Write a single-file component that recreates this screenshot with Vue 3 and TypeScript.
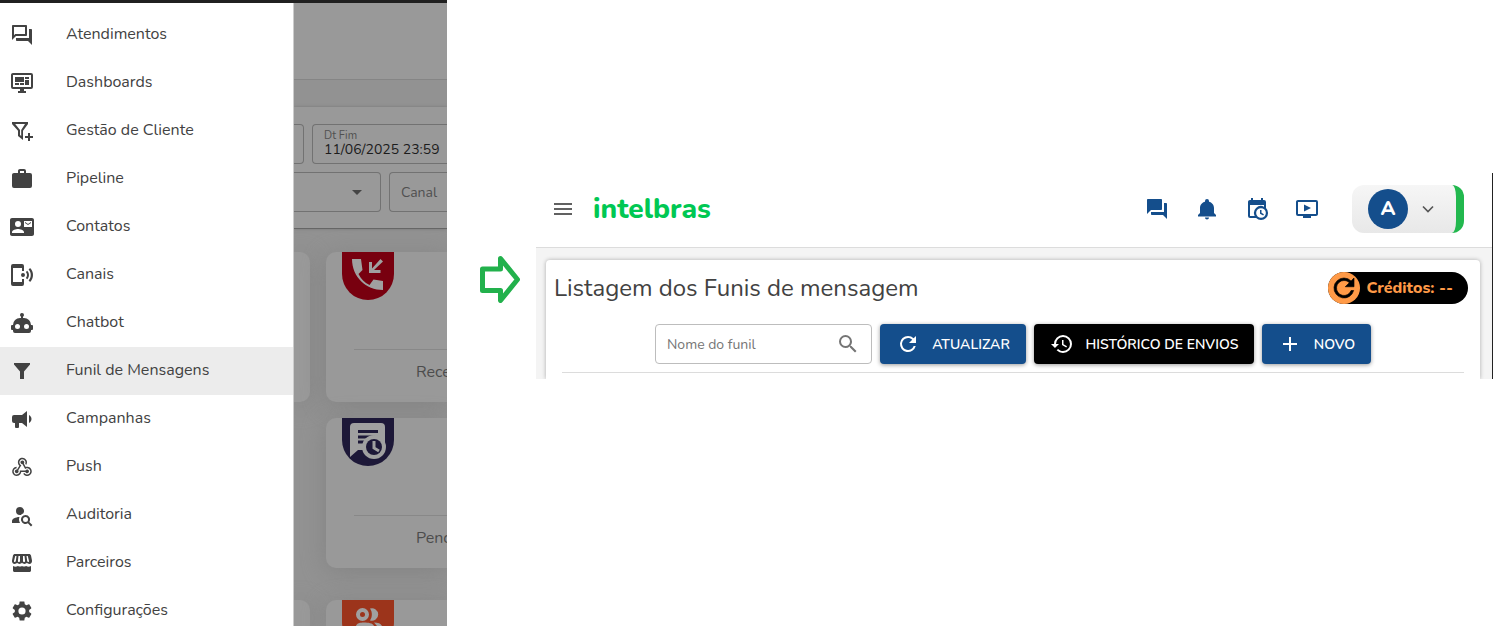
<script setup lang="ts">
interface MenuItem {
  label: string
  path: string
  active?: boolean
}

const forumOutline = 'M15 4v7H5.17L4 12.17V4h11m1-2H3c-.55 0-1 .45-1 1v14l4-4h10c.55 0 1-.45 1-1V3c0-.55-.45-1-1-1zm5 4h-2v9H6v2c0 .55.45 1 1 1h11l4 4V7c0-.55-.45-1-1-1z'
const forum = 'M21 6h-2v9H6v2c0 .55.45 1 1 1h11l4 4V7c0-.55-.45-1-1-1zm-4 6V3c0-.55-.45-1-1-1H3c-.55 0-1 .45-1 1v14l4-4h10c.55 0 1-.45 1-1z'
const bell = 'M12 22.5c1.1 0 2-.9 2-2h-4c0 1.1.9 2 2 2zm7-6.500V11c0-3.200-2.200-5.700-5-6.300V4a2 2 0 0 0-4 0v.7C7.200 5.300 5 7.800 5 11v5l-2 2v1.500h18V18z'
const calendarClock = 'M15 13h1.500v2.820l2.440 1.410-.75 1.300L15 16.690V13m4-5H5v11h4.670A7 7 0 0 1 19 9.670V8M5 21a2 2 0 0 1-2-2V5c0-1.110.89-2 2-2h1V1h2v2h8V1h2v2h1a2 2 0 0 1 2 2v6.100a7 7 0 0 1-9.900 9.900H5m11-9.850A4.850 4.850 0 0 0 11.150 16 4.850 4.850 0 1 0 16 11.150z'
const video = 'M21 3H3c-1.110 0-2 .89-2 2v12a2 2 0 0 0 2 2h5v2h8v-2h5c1.100 0 2-.9 2-2V5a2 2 0 0 0-2-2zm0 14H3V5h18v12zM9 7.500v7l7-3.500z'
const refresh = 'M17.650 6.350A7.960 7.960 0 0 0 12 4a8 8 0 1 0 7.730 10h-2.080A6 6 0 1 1 12 6c1.660 0 3.140.69 4.220 1.780L13 11h7V4z'
const history = 'M13.500 8H12v5l4.280 2.540.72-1.210-3.500-2.080V8M13 3a9 9 0 0 0-9 9H1l3.960 4.030L9 12H6a7 7 0 1 1 7 7c-1.930 0-3.680-.79-4.940-2.060l-1.420 1.420A8.900 8.900 0 0 0 13 21a9 9 0 0 0 0-18'
const magnify = 'M9.500 3A6.500 6.500 0 0 1 16 9.500c0 1.610-.59 3.090-1.560 4.230l.27.27h.79l5 5-1.500 1.500-5-5v-.79l-.27-.27A6.520 6.520 0 0 1 9.500 16a6.500 6.500 0 0 1 0-13m0 2a4.500 4.500 0 1 0 0 9 4.500 4.500 0 0 0 0-9'

const menu: MenuItem[] = [
  { label: 'Atendimentos', path: forumOutline },
  { label: 'Dashboards', path: 'M21 16V4H3v12h18m0-14a2 2 0 0 1 2 2v12a2 2 0 0 1-2 2h-7v2h2v2H8v-2h2v-2H3a2 2 0 0 1-2-2V4c0-1.110.89-2 2-2h18M5 6h9v5H5V6m10 0h4v2h-4V6m4 3v5h-4V9h4M5 12h4v2H5v-2m5 0h4v2h-4v-2z' },
  { label: 'Gestão de Cliente', path: 'M2 3h16v2l-5 6.700V21l-5-4v-5.300L2 5zM5.200 5 10 11v5l1.200 1V11L15 5zM18 14h2v3h3v2h-3v3h-2v-3h-3v-2h3z' },
  { label: 'Pipeline', path: 'M10 2h4a2 2 0 0 1 2 2v2h4a2 2 0 0 1 2 2v11a2 2 0 0 1-2 2H4a2 2 0 0 1-2-2V8c0-1.110.89-2 2-2h4V4c0-1.110.89-2 2-2m4 4V4h-4v2h4z' },
  { label: 'Contatos', path: 'M21 8V7l-3 2-3-2v1l3 2 3-2zm1-5H2C.9 3 0 3.900 0 5v14c0 1.100.9 2 2 2h20c1.100 0 2-.9 2-2V5c0-1.100-.9-2-2-2zM8 6a3 3 0 1 1 0 6 3 3 0 0 1 0-6zm6 12H2v-1c0-2 4-3.100 6-3.100s6 1.100 6 3.100v1zm8-6h-8V6h8v6z' },
  { label: 'Canais', path: 'M3 1h9a2 2 0 0 1 2 2v5h-2V5H3v14h9v-3h2v5a2 2 0 0 1-2 2H3a2 2 0 0 1-2-2V3a2 2 0 0 1 2-2zM13 10a2 2 0 1 1 0 4 2 2 0 0 1 0-4zM17.200 7.700c2.400 2.400 2.400 6.200 0 8.600l-1.300-1.300c1.500-1.800 1.500-4.200 0-6zM20.100 5c3.900 3.900 3.900 10.100 0 14l-1.500-1.500c2.900-3.200 2.900-7.800 0-11z' },
  { label: 'Chatbot', path: 'M12 2a2 2 0 0 1 2 2c0 .74-.4 1.390-1 1.730V7h1a7 7 0 0 1 7 7h1a1 1 0 0 1 1 1v3a1 1 0 0 1-1 1h-1v1a2 2 0 0 1-2 2H5a2 2 0 0 1-2-2v-1H2a1 1 0 0 1-1-1v-3a1 1 0 0 1 1-1h1a7 7 0 0 1 7-7h1V5.730A2 2 0 0 1 12 2M7.500 13a2.500 2.500 0 1 0 0 5 2.500 2.500 0 0 0 0-5m9 0a2.500 2.500 0 1 0 0 5 2.500 2.500 0 0 0 0-5z' },
  { label: 'Funil de Mensagens', path: 'M4 4h16v1.500l-6 7V20h-4v-7.500l-6-7z', active: true },
  { label: 'Campanhas', path: 'M12 8H4a2 2 0 0 0-2 2v4a2 2 0 0 0 2 2h1v4a1 1 0 0 0 1 1h2a1 1 0 0 0 1-1v-4h3l5 4V4l-5 4m9.500 4c0 1.710-.96 3.260-2.500 4V8c1.530.75 2.500 2.300 2.500 4z' },
  { label: 'Push', path: 'M10.46,19C9,21.07 6.15,21.59 4.09,20.15C2.04,18.71 1.56,15.84 3,13.75C3.87,12.5 5.21,11.83 6.58,11.77L6.63,13.2C5.72,13.27 4.84,13.74 4.27,14.56C3.27,16 3.58,17.94 4.95,18.91C6.33,19.87 8.26,19.5 9.26,18.07C9.57,17.62 9.75,17.13 9.82,16.63V15.62L15.4,15.58L15.47,15.47C16,14.55 17.15,14.23 18.05,14.75C18.95,15.27 19.26,16.43 18.73,17.35C18.2,18.26 17.04,18.58 16.14,18.06C15.73,17.83 15.44,17.46 15.31,17.04L11.24,17.06C11.13,17.73 10.87,18.38 10.46,19M17.74,11.86C20.27,12.17 22.07,14.44 21.76,16.93C21.45,19.43 19.15,21.2 16.62,20.89C15.13,20.71 13.9,19.86 13.19,18.68L14.43,17.96C14.92,18.73 15.75,19.28 16.75,19.41C18.5,19.62 20.05,18.43 20.26,16.76C20.47,15.09 19.23,13.56 17.5,13.35C16.96,13.29 16.44,13.36 15.97,13.53L15.12,13.97L12.54,9.2H12.32C11.26,9.16 10.41,8.29 10.44,7.25C10.47,6.21 11.4,5.4 12.45,5.44C13.5,5.5 14.33,6.35 14.3,7.39C14.28,7.83 14.11,8.23 13.84,8.54L15.74,12.05C16.36,11.85 17.04,11.78 17.74,11.86M8.25,9.14C7.25,6.79 8.31,4.1 10.62,3.12C12.94,2.14 15.62,3.25 16.62,5.6C17.21,6.97 17.09,8.47 16.42,9.67L15.18,8.95C15.6,8.14 15.67,7.15 15.27,6.22C14.59,4.62 12.78,3.85 11.23,4.5C9.67,5.16 8.97,7 9.65,8.6C9.93,9.26 10.4,9.77 10.97,10.11L11.36,10.32L8.29,15.31C8.32,15.36 8.36,15.42 8.39,15.5C8.88,16.41 8.54,17.56 7.62,18.05C6.71,18.54 5.56,18.18 5.06,17.24C4.57,16.31 4.91,15.16 5.83,14.67C6.22,14.46 6.65,14.41 7.06,14.5L9.37,10.73C8.9,10.3 8.5,9.76 8.25,9.14Z' },
  { label: 'Auditoria', path: 'M15.500 12a4.500 4.500 0 0 1 3.810 6.900L22.390 22 21 23.390l-3.120-3.070A4.500 4.500 0 1 1 15.500 12m0 2a2.500 2.500 0 1 0 0 5 2.500 2.500 0 0 0 0-5M10 4a4 4 0 0 1 3.180 6.430c-.86.32-1.630.83-2.270 1.470L10 12a4 4 0 0 1 0-8M2 20v-2c0-2.120 3.310-3.860 7.500-4-.32.78-.5 1.620-.5 2.500 0 1.290.38 2.500 1 3.500H2z' },
  { label: 'Parceiros', path: 'M5 3h14c1 0 1.800.6 2 1.500l1 5c.3 1.900-1 3.500-2.700 3.500-1 0-1.900-.5-2.400-1.200-.6.700-1.400 1.200-2.400 1.200s-1.900-.5-2.500-1.200c-.6.700-1.500 1.200-2.500 1.200s-1.800-.5-2.400-1.200c-.5.700-1.400 1.200-2.400 1.200C3 13 1.700 11.400 2 9.500l1-5C3.200 3.600 4 3 5 3zm.2 2L4 10c-.1.600.3 1 .8 1s.9-.4 1-1l.7-5zm3.300 0-.6 5c0 .600.400 1 1 1s1.100-.4 1.100-1V5zm4.500 0v5c0 .600.500 1 1.100 1s1-.4 1-1l-.6-5zm3.500 0 .7 5c.1.600.500 1 1 1s.9-.4.800-1l-1.200-5zM3 15c1.500 1 3.500.9 5 0 1.200.8 2.800.8 4 0 1.200.8 2.800.8 4 0 1.500.9 3.500 1 5 0v4.500c0 .8-.7 1.500-1.500 1.500h-15c-.8 0-1.500-.7-1.500-1.500z' },
  { label: 'Configurações', path: 'M19.140 12.940c.04-.3.06-.61.06-.94 0-.32-.02-.64-.07-.94l2.030-1.580c.18-.14.23-.41.12-.61l-1.920-3.320c-.12-.22-.37-.29-.59-.22l-2.390.96c-.5-.38-1.030-.7-1.620-.94l-.36-2.540c-.04-.24-.24-.41-.48-.41h-3.840c-.24 0-.43.17-.47.41l-.36 2.540c-.59.24-1.130.57-1.620.94l-2.390-.96c-.22-.08-.47 0-.59.22L2.740 8.870c-.12.21-.08.47.12.61l2.030 1.580c-.05.3-.09.63-.09.94s.02.64.07.94l-2.030 1.580c-.18.14-.23.41-.12.61l1.920 3.320c.12.22.37.29.59.22l2.390-.96c.5.38 1.030.7 1.620.94l.36 2.540c.05.24.24.41.48.41h3.840c.24 0 .44-.17.47-.41l.36-2.540c.59-.24 1.130-.56 1.620-.94l2.390.96c.22.08.47 0 .59-.22l1.920-3.320c.12-.22.07-.47-.12-.61l-2.010-1.580zM12 15.600a3.600 3.600 0 1 1 0-7.200 3.600 3.600 0 0 1 0 7.200z' },
]

const shortcuts = [
  { label: 'Conversas', path: forum },
  { label: 'Notificações', path: bell },
  { label: 'Agendamentos', path: calendarClock },
  { label: 'Vídeos', path: video },
]
</script>

<template>
  <div class="page">
    <section class="app-left">
      <nav class="drawer">
        <a v-for="item in menu" :key="item.label" href="#" class="item" :class="{ active: item.active }">
          <svg class="icon" viewBox="0 0 24 24" fill-rule="evenodd"><path :d="item.path" /></svg>
          <span>{{ item.label }}</span>
        </a>
      </nav>
      <div class="shade">
        <div class="shade-header"></div>
        <div class="filters">
          <div class="row">
            <div class="field cut narrow"></div>
            <label class="field grow date">
              <span>Dt Fim</span>
              <input type="text" value="11/06/2025 23:59" />
            </label>
          </div>
          <div class="row">
            <button class="field cut caret" aria-label="Abrir opções">
              <svg viewBox="0 0 24 24"><path d="M7 10l5 5 5-5z" /></svg>
            </button>
            <button class="field grow canal">Canal</button>
          </div>
        </div>
        <div class="tiles">
          <div class="tile edge"></div>
          <article class="tile">
            <div class="badge red">
              <svg viewBox="0 0 52 48" fill="#a0a0a0">
                <path d="M10 7h9l1.500 11-4 4c2.500 5 6 8.500 11 11l4-5.500L41 29v9C24 38 10 25 10 7z" />
                <path d="M27 10h3v6.500L38.500 7l2.500 2.500L32 18h6.500v3H27z" />
              </svg>
            </div>
            <hr />
            <p>Recebidos</p>
          </article>
          <div></div>
          <article class="tile">
            <div class="badge navy">
              <svg viewBox="0 0 52 48">
                <path fill="#a0a0a0" d="M12 5h27a4 4 0 0 1 4 4v17H28v6H16l-8 7V9a4 4 0 0 1 4-4z" />
                <path stroke="#1d1838" stroke-width="3" d="M16 13.500h20M16 19h17M16 24h9" />
                <circle cx="32" cy="29" r="12" fill="#a0a0a0" />
                <circle cx="32" cy="29" r="8" fill="#1d1838" />
                <path d="M32 23v7l5 3" fill="none" stroke="#a0a0a0" stroke-width="3" />
              </svg>
            </div>
            <hr />
            <p>Pendentes</p>
          </article>
          <div class="tile edge last"></div>
          <article class="tile last">
            <div class="badge orange">
              <svg viewBox="0 0 52 26" fill="#a0a0a0">
                <circle cx="20.500" cy="14.500" r="4.500" fill="none" stroke="#a0a0a0" stroke-width="4" />
                <path d="M28 8.500a6.300 6.300 0 1 1 0 12c2.500-3.500 2.500-8.500 0-12zM14 26c1-3 4-3.500 8-3.500S31 23 32 26zM32 22.500c4 0 7 1 8 3.500h-5z" />
              </svg>
            </div>
          </article>
        </div>
      </div>
    </section>

    <div class="pointer">
      <svg viewBox="0 0 40 48"><path d="M2.500 14h18V3.500L37.500 24.500 20.500 45.500V35.500H2.500z" fill="#fff" stroke="#22b14c" stroke-width="5" stroke-linejoin="round" /></svg>
    </div>

    <section class="app-right">
      <header class="topbar">
        <button class="plain burger" aria-label="Menu">
          <svg class="icon" viewBox="0 0 24 24"><path d="M3 6h18v2H3zM3 11h18v2H3zM3 16h18v2H3z" /></svg>
        </button>
        <span class="logo">intelbras</span>
        <div class="shortcuts">
          <button v-for="s in shortcuts" :key="s.label" class="plain" :aria-label="s.label">
            <svg class="icon" viewBox="0 0 24 24" fill-rule="evenodd"><path :d="s.path" /></svg>
          </button>
        </div>
        <button class="user">
          <span class="avatar">A</span>
          <svg class="chevron" viewBox="0 0 24 24"><path d="M6 9l6 6 6-6" /></svg>
        </button>
      </header>
      <main>
        <div class="card">
          <div class="heading">
            <h1>Listagem dos Funis de mensagem</h1>
            <button class="credits">
              <span class="coin"><svg viewBox="0 0 24 24"><path :d="refresh" /></svg></span>
              <span>Créditos: --</span>
            </button>
          </div>
          <div class="toolbar">
            <label class="search">
              <input type="text" placeholder="Nome do funil" aria-label="Nome do funil" />
              <svg class="icon" viewBox="0 0 24 24"><path :d="magnify" /></svg>
            </label>
            <button class="btn update"><svg class="icon" viewBox="0 0 24 24"><path :d="refresh" /></svg>ATUALIZAR</button>
            <button class="btn black"><svg class="icon" viewBox="0 0 24 24"><path :d="history" /></svg>HISTÓRICO DE ENVIOS</button>
            <button class="btn new"><svg class="icon" viewBox="0 0 24 24"><path d="M11 5h2v6h6v2h-6v6h-2v-6H5v-2h6z" /></svg>NOVO</button>
          </div>
          <hr />
        </div>
      </main>
    </section>
  </div>
</template>

<style>
body {
  margin: 0;
  background: #fff;
}
</style>

<style scoped>
.page,
.page * {
  box-sizing: border-box;
}
.page {
  display: grid;
  grid-template-columns: 447fr 89fr 957fr 10fr;
  align-items: start;
  font-family: Nunito, Lato, "Open Sans", sans-serif;
  font-size: 16px;
  color: #424242;
}
button,
input {
  font-family: inherit;
}
button {
  cursor: pointer;
}
.icon {
  display: block;
  width: 24px;
  height: 24px;
  flex: none;
  fill: currentColor;
}
.app-left {
  display: flex;
  border-top: 3px solid #202020;
  overflow: hidden;
}
.drawer {
  flex: 0 0 294px;
  padding-top: 8px;
  background: #fff;
  border-right: 1px solid #ccc;
}
.item {
  display: flex;
  gap: 32px;
  height: 48px;
  padding: 12px 0 0 10px;
  color: #424242;
  text-decoration: none;
  font-size: 16px;
  line-height: 22px;
}
.item.active {
  background: #ececec;
}
.item:last-child {
  height: 39px;
}
.shade {
  flex: 1;
  min-width: 0;
  overflow: hidden;
  background: #929292;
}
.shade-header {
  height: 77px;
  background: #999;
  border-bottom: 1px solid #858585;
}
.filters {
  display: flex;
  flex-direction: column;
  gap: 8px;
  margin-top: 27px;
  padding: 17px 0 16px;
  background: #999;
  border-bottom: 1px solid #666;
  box-shadow: 0 0 3px #777;
}
.row {
  display: flex;
  gap: 8px;
}
.field {
  flex: none;
  height: 40px;
  padding: 0 11px;
  background: none;
  border: 1px solid #727272;
  border-radius: 4px 0 0 4px;
  color: #505050;
  font-size: 14px;
}
.grow {
  flex: 1;
  min-width: 0;
  border-right: 0;
  text-align: left;
  overflow: hidden;
}
.cut {
  border-left: 0;
  border-radius: 0 4px 4px 0;
}
.narrow {
  width: 10px;
  padding: 0;
}
.date {
  padding: 5px 0 0 11px;
}
.date span {
  display: block;
  font-size: 11px;
  line-height: 12px;
}
.date input {
  display: block;
  width: 120px;
  height: 14px;
  padding: 0;
  border: 0;
  background: none;
  color: #1c1c1c;
  font-size: 14px;
}
.caret {
  width: 87px;
  display: flex;
  justify-content: flex-end;
  align-items: center;
}
.caret svg {
  width: 24px;
  fill: #444;
}
.tiles {
  display: grid;
  grid-template-columns: 16px 1fr;
  gap: 16px;
  padding-top: 23px;
}
.tile {
  height: 150px;
  background: #999;
  border-radius: 10px 0 0 10px;
  box-shadow: 0 4px 24px #848484;
  overflow: hidden;
  padding-left: 16px;
}
.tile.edge {
  border-radius: 0 10px 10px 0;
}
.tile.last {
  height: 26px;
  margin-top: 16px;
  border-bottom-left-radius: 0;
  border-bottom-right-radius: 0;
}
.tile hr {
  margin: 49px 0 0 12px;
  border: 0;
  border-top: 1px solid #888;
}
.tile p {
  margin: 11px 0 0 74px;
  line-height: 22px;
  color: #4c4c4c;
  font-size: 16px;
}
.badge {
  width: 52px;
  height: 48px;
  border-radius: 0 0 26px 26px;
  overflow: hidden;
}
.badge svg {
  display: block;
  width: 52px;
}
.red {
  background: #78000f;
}
.navy {
  background: #1d1838;
}
.orange {
  background: #9c341b;
}
.pointer {
  display: flex;
  justify-content: center;
  padding: 255px 0 0 17px;
}
.pointer svg {
  width: 40px;
  height: 48px;
}
.app-right {
  margin-top: 173px;
  border-right: 1px solid #222;
}
.topbar {
  display: flex;
  align-items: center;
  height: 75px;
  padding: 0 28px 3px 15px;
  border-bottom: 1px solid #dcdcdc;
}
.plain {
  padding: 0;
  border: 0;
  background: none;
  color: #144e8c;
}
.burger {
  color: #616161;
}
.logo {
  margin-left: 18px;
  color: #00c853;
  font-size: 28px;
  line-height: 32px;
  font-weight: 800;
}
.shortcuts {
  display: flex;
  gap: 26px;
  margin: 0 33px 0 auto;
}
.user {
  display: flex;
  align-items: center;
  gap: 12px;
  width: 112px;
  height: 48px;
  padding: 0 0 0 16px;
  border: 0;
  border-right: 8px solid #22b84e;
  border-radius: 12px;
  background: linear-gradient(#f6f6f6, #e8e8e8);
}
.avatar {
  display: flex;
  align-items: center;
  justify-content: center;
  width: 40px;
  height: 40px;
  border-radius: 50%;
  background: #144e8c;
  color: #fff;
  font-size: 20px;
  font-weight: 800;
}
.chevron {
  width: 20px;
  margin-left: -2px;
  fill: none;
  stroke: #555;
  stroke-width: 2;
}
main {
  padding: 12px 12px 0 10px;
  background: #f4f4f4;
  overflow: hidden;
}
.card {
  padding: 12px 16px 6px;
  background: #fff;
  border-radius: 4px 4px 0 0;
  box-shadow: 0 0 4px rgba(0, 0, 0, 0.3);
}
.heading {
  display: flex;
  align-items: center;
  justify-content: space-between;
  margin: 0 -4px 0 -8px;
}
h1 {
  margin: 0;
  font-size: 24px;
  line-height: 32px;
  font-weight: 400;
}
.credits {
  display: flex;
  align-items: center;
  gap: 6px;
  height: 32px;
  padding: 0 15px 0 0;
  border: 0;
  border-radius: 16px;
  background: #000;
  color: #ff9a47;
  font-size: 16px;
  font-weight: 800;
}
.coin {
  display: flex;
  align-items: center;
  justify-content: center;
  width: 32px;
  height: 32px;
  border-radius: 50%;
  background: #ff9a47;
}
.coin svg {
  width: 30px;
  height: 30px;
  stroke: #000;
  stroke-width: 0.5;
}
.toolbar {
  display: flex;
  justify-content: center;
  gap: 8px;
  margin: 20px 0 8px;
}
.search {
  display: flex;
  align-items: center;
  width: 217px;
  height: 40px;
  padding: 0 11px;
  border: 1px solid #bdbdbd;
  border-radius: 4px;
  color: #757575;
}
.search input {
  flex: 1;
  min-width: 0;
  padding: 0;
  border: 0;
  outline: 0;
  background: none;
  font-size: 14px;
}
.search input::placeholder {
  color: #757575;
  opacity: 1;
}
.btn {
  display: flex;
  align-items: center;
  justify-content: center;
  gap: 12px;
  height: 40px;
  padding: 0;
  border: 0;
  border-radius: 4px;
  background: #144e8c;
  color: #fff;
  font-size: 14px;
  font-weight: 600;
  box-shadow: 0 1px 4px rgba(0, 0, 0, 0.4);
}
.update {
  width: 146px;
}
.black {
  width: 220px;
  background: #000;
}
.new {
  width: 109px;
}
.card hr {
  margin: 0;
  border: 0;
  border-top: 1px solid #dcdcdc;
}
</style>
